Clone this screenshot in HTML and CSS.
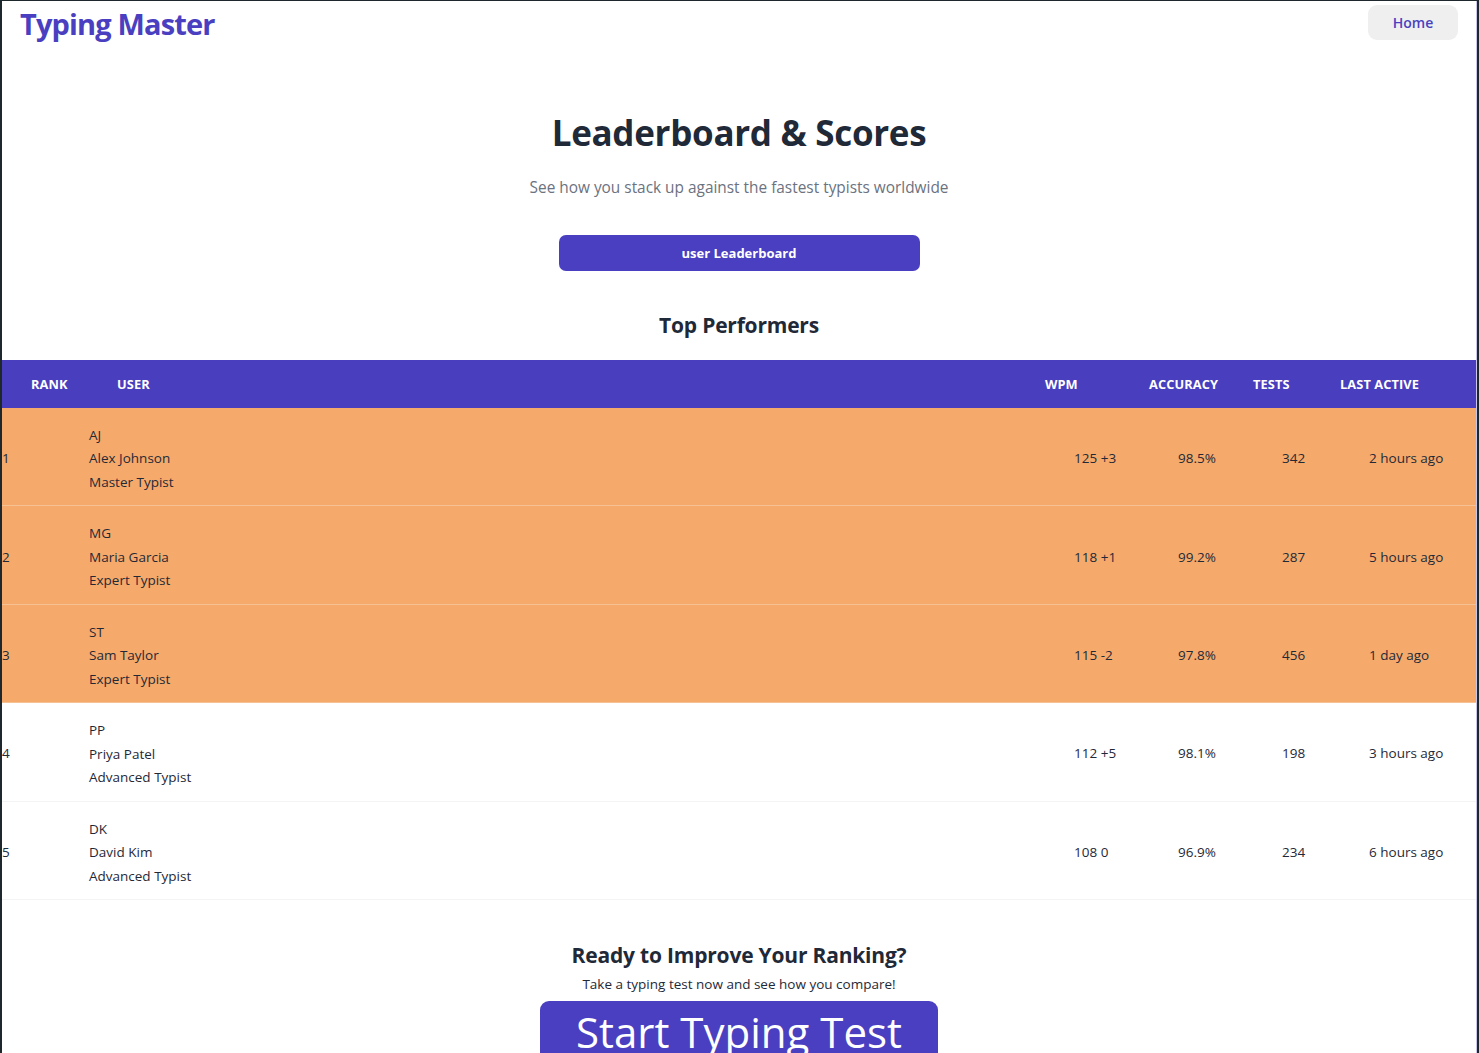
FILE: index.html
```html
<!DOCTYPE html>
<html lang="en">
<head>
<meta charset="utf-8">
<title>Typing Master - Leaderboard</title>
<link rel="stylesheet" href="styles.css">
</head>
<body>
<div class="page">
  <header class="topbar">
    <div class="logo">Typing Master</div>
    <button class="home-btn">Home</button>
  </header>

  <section class="hero">
    <h1 class="title">Leaderboard &amp; Scores</h1>
    <p class="subtitle">See how you stack up against the fastest typists worldwide</p>
    <button class="tab-btn">user Leaderboard</button>
    <h2 class="section-title">Top Performers</h2>
  </section>

  <div class="table">
    <div class="row head">
      <div class="th">Rank</div>
      <div class="th">User</div>
      <div class="th">WPM</div>
      <div class="th">Accuracy</div>
      <div class="th">Tests</div>
      <div class="th">Last Active</div>
    </div>

    <div class="row body top">
      <div class="td rank">1</div>
      <div class="td user"><span>AJ</span><span>Alex Johnson</span><span>Master Typist</span></div>
      <div class="td num">125 +3</div>
      <div class="td num">98.5%</div>
      <div class="td num">342</div>
      <div class="td num">2 hours ago</div>
    </div>
    <div class="row body top">
      <div class="td rank">2</div>
      <div class="td user"><span>MG</span><span>Maria Garcia</span><span>Expert Typist</span></div>
      <div class="td num">118 +1</div>
      <div class="td num">99.2%</div>
      <div class="td num">287</div>
      <div class="td num">5 hours ago</div>
    </div>
    <div class="row body top">
      <div class="td rank">3</div>
      <div class="td user"><span>ST</span><span>Sam Taylor</span><span>Expert Typist</span></div>
      <div class="td num">115 -2</div>
      <div class="td num">97.8%</div>
      <div class="td num">456</div>
      <div class="td num">1 day ago</div>
    </div>
    <div class="row body">
      <div class="td rank">4</div>
      <div class="td user"><span>PP</span><span>Priya Patel</span><span>Advanced Typist</span></div>
      <div class="td num">112 +5</div>
      <div class="td num">98.1%</div>
      <div class="td num">198</div>
      <div class="td num">3 hours ago</div>
    </div>
    <div class="row body">
      <div class="td rank">5</div>
      <div class="td user"><span>DK</span><span>David Kim</span><span>Advanced Typist</span></div>
      <div class="td num">108 0</div>
      <div class="td num">96.9%</div>
      <div class="td num">234</div>
      <div class="td num">6 hours ago</div>
    </div>
  </div>

  <section class="cta">
    <h2 class="cta-title">Ready to Improve Your Ranking?</h2>
    <p class="cta-text">Take a typing test now and see how you compare!</p>
    <button class="start-btn">Start Typing Test</button>
  </section>
</div>
</body>
</html>
```

FILE: styles.css
```css
html {
  background: #1e272c;
  height: 100%;
}
body {
  margin: 1px 2px 0 2px;
  background: #ffffff;
  min-height: calc(100% - 1px);
  font-family: "Open Sans", "Noto Sans", sans-serif;
  color: #1f2937;
  overflow: hidden;
}
.page {
  border-right: 1px solid #c9c6ea;
  min-height: 1052px;
}
button {
  font-family: inherit;
  border: none;
  cursor: pointer;
}
.topbar {
  display: flex;
  justify-content: space-between;
  align-items: flex-start;
  height: 55px;
  padding: 0 18px 0 18px;
}
.logo {
  font-size: 29px;
  font-weight: 700;
  color: #4a3fc0;
  letter-spacing: -0.85px;
  line-height: 44px;
  margin-top: 1px;
}
.home-btn {
  margin-top: 4px;
  width: 90px;
  height: 35px;
  background: #efefef;
  border-radius: 9px;
  color: #4a3fc0;
  font-size: 14px;
  font-weight: 600;
}
.hero {
  display: flex;
  flex-direction: column;
  align-items: center;
}
.title {
  margin: 55px 0 0 0;
  font-size: 35px;
  font-weight: 700;
  line-height: 44px;
  letter-spacing: -0.3px;
  color: #1f2937;
}
.subtitle {
  margin: 22px 0 0 0;
  font-size: 15.4px;
  line-height: 22px;
  color: #6b7280;
}
.tab-btn {
  margin-top: 36px;
  width: 361px;
  height: 36px;
  background: #4a3fc0;
  color: #ffffff;
  border-radius: 7px;
  font-size: 13px;
  font-weight: 700;
}
.section-title {
  margin: 40px 0 0 0;
  font-size: 21px;
  font-weight: 700;
  line-height: 28px;
  letter-spacing: -0.2px;
}
.table {
  margin-top: 21px;
}
.row {
  display: grid;
  grid-template-columns: 86px 928px 104px 104px 87px 1fr;
}
.head {
  background: #483ebe;
  height: 48px;
  align-items: center;
}
.th {
  padding-left: 29px;
  color: #ffffff;
  font-size: 12.8px;
  font-weight: 700;
  text-transform: uppercase;
  letter-spacing: 0.1px;
}
.body {
  align-items: center;
  border-bottom: 1px solid #f3f4f6;
  height: 98.4px;
  box-sizing: border-box;
  font-size: 13.5px;
  color: #1f2937;
}
.body.top {
  background: #f5a96b;
  border-bottom-color: #f7c293;
}
.td {
  padding-top: 3px;
}
.td.rank {
  padding-left: 0;
}
.td.user {
  display: flex;
  flex-direction: column;
  padding-left: 1px;
  padding-top: 5px;
  line-height: 23.5px;
}
.td.num {
  padding-left: 58px;
  white-space: nowrap;
}
.cta {
  display: flex;
  flex-direction: column;
  align-items: center;
  padding-top: 40px;
}
.cta-title {
  margin: 0;
  font-size: 21px;
  font-weight: 700;
  line-height: 30px;
  letter-spacing: -0.2px;
}
.cta-text {
  margin: 4px 0 0 0;
  font-size: 13.5px;
  line-height: 20px;
}
.start-btn {
  margin-top: 7px;
  width: 398px;
  height: 70px;
  background: #4a3fc0;
  color: #ffffff;
  border-radius: 9px;
  font-size: 42px;
  font-weight: 400;
  line-height: 62px;
  padding: 0;
  display: flex;
  justify-content: center;
  align-items: flex-start;
}
```
